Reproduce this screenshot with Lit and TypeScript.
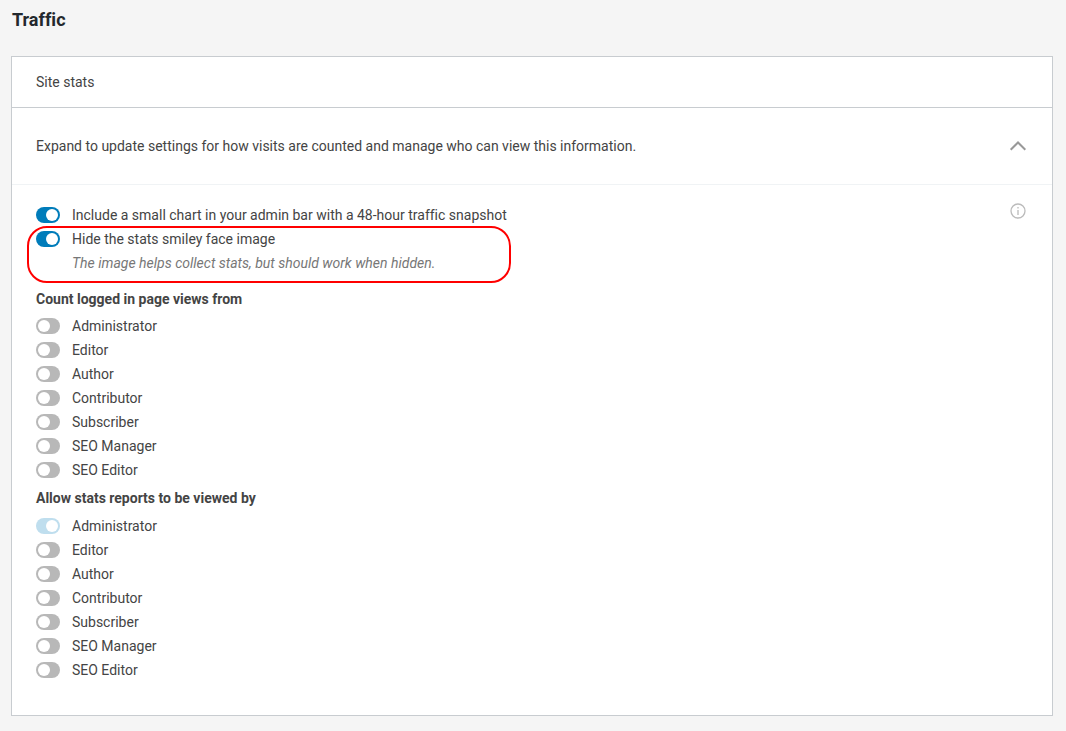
import { LitElement, html, css } from "lit";
import { customElement, property, state } from "lit/decorators.js";

interface Role {
  name: string;
  on?: boolean;
  disabled?: boolean;
}

const COUNT_ROLES: Role[] = [
  { name: "Administrator" },
  { name: "Editor" },
  { name: "Author" },
  { name: "Contributor" },
  { name: "Subscriber" },
  { name: "SEO Manager" },
  { name: "SEO Editor" },
];

const VIEW_ROLES: Role[] = COUNT_ROLES.map((role) =>
  role.name === "Administrator" ? { ...role, on: true, disabled: true } : role
);

@customElement("toggle-row")
export class ToggleRow extends LitElement {
  @property() label = "";
  @property({ type: Boolean }) on = false;
  @property({ type: Boolean }) disabled = false;

  static styles = css`
    :host {
      display: block;
    }
    .row {
      display: flex;
      align-items: center;
      gap: 12px;
      width: fit-content;
    }
    .switch {
      appearance: none;
      box-sizing: border-box;
      flex: none;
      display: flex;
      align-items: center;
      width: 24px;
      height: 16px;
      margin: 0;
      padding: 0 2px;
      border-radius: 8px;
      background: #b8b8b8;
      cursor: pointer;
    }
    .switch::before {
      content: "";
      width: 12px;
      height: 12px;
      border-radius: 50%;
      background: #fff;
    }
    .switch:checked {
      justify-content: flex-end;
      background: #007cba;
    }
    .switch:disabled {
      background: #bfdeee;
      cursor: default;
    }
    .switch:focus-visible {
      outline: 2px solid #007cba;
      outline-offset: 1px;
    }
  `;

  render() {
    return html`<label class="row">
      <input
        class="switch"
        type="checkbox"
        role="switch"
        .checked=${this.on}
        ?disabled=${this.disabled}
        @change=${(e: Event) => (this.on = (e.target as HTMLInputElement).checked)}
      />
      <span>${this.label}</span>
    </label>`;
  }
}

@customElement("app-root")
export class AppRoot extends LitElement {
  @state() private open = true;

  static styles = css`
    :host {
      display: block;
      box-sizing: border-box;
      min-height: 100vh;
      padding: 8px 13px 15px 11px;
      background: #f5f5f5;
      color: #444;
      font: 14px/24px Roboto, "Open Sans", sans-serif;
      font-variant-ligatures: none;
    }
    .title {
      margin: 0 0 24px 1px;
      color: #23282d;
      font-size: 18px;
      line-height: 24px;
      font-weight: 700;
    }
    .card {
      border: 1px solid #c8ccd0;
      background: #fff;
    }
    .card-title {
      margin: 0;
      padding: 13px 24px;
      border-bottom: 1px solid #c8ccd0;
      font-size: 14px;
      font-weight: 400;
    }
    .summary {
      display: flex;
      align-items: center;
      justify-content: space-between;
      padding: 26px 24px;
      border-bottom: 1px solid #f0f3f5;
    }
    .summary-text {
      margin: 0;
    }
    .icon-button {
      display: block;
      flex: none;
      padding: 0;
      border: 0;
      background: none;
      cursor: pointer;
    }
    .icon {
      display: block;
      width: 20px;
      height: 20px;
      fill: none;
    }
    .chevron {
      stroke: #999;
      stroke-width: 2;
    }
    .info {
      stroke: #bbb;
      stroke-width: 1.3;
    }
    .settings {
      display: flex;
      align-items: flex-start;
      justify-content: space-between;
      padding: 16px 24px 33px;
    }
    .settings[hidden] {
      display: none;
    }
    .options {
      padding-top: 2px;
    }
    .featured {
      position: relative;
      margin-bottom: 8px;
    }
    .highlight {
      position: absolute;
      inset: -1px auto -8px -9px;
      box-sizing: border-box;
      width: 484px;
      border: 2px solid #f00;
      border-radius: 20px;
      pointer-events: none;
    }
    .hint {
      margin: 0 0 0 36px;
      color: #777;
      font-style: italic;
    }
    .group {
      margin: 0;
      padding: 0;
      border: 0;
    }
    .group-title {
      padding: 4px 0 3px;
      font-weight: 700;
    }
    .group + .group {
      padding-top: 1px;
    }
  `;

  private group(title: string, roles: Role[]) {
    return html`<fieldset class="group">
      <legend class="group-title">${title}</legend>
      ${roles.map(
        (r) => html`<toggle-row .label=${r.name} .on=${!!r.on} .disabled=${!!r.disabled}></toggle-row>`
      )}
    </fieldset>`;
  }

  render() {
    return html`
      <h1 class="title">Traffic</h1>
      <section class="card">
        <h2 class="card-title">Site stats</h2>
        <div class="summary">
          <p class="summary-text">
            Expand to update settings for how visits are counted and manage who can view this information.
          </p>
          <button
            class="icon-button"
            type="button"
            aria-label="Toggle settings"
            aria-expanded=${this.open ? "true" : "false"}
            @click=${() => (this.open = !this.open)}
          >
            <svg class="icon chevron" viewBox="0 0 20 20" aria-hidden="true">
              <path d="M2.7 13.8 10 6.5l7.3 7.3" />
            </svg>
          </button>
        </div>
        <div class="settings" ?hidden=${!this.open}>
          <div class="options">
            <toggle-row
              label="Include a small chart in your admin bar with a 48-hour traffic snapshot"
              on
            ></toggle-row>
            <div class="featured">
              <toggle-row label="Hide the stats smiley face image" on></toggle-row>
              <p class="hint">The image helps collect stats, but should work when hidden.</p>
              <div class="highlight"></div>
            </div>
            ${this.group("Count logged in page views from", COUNT_ROLES)}
            ${this.group("Allow stats reports to be viewed by", VIEW_ROLES)}
          </div>
          <button class="icon-button" type="button" aria-label="More information">
            <svg class="icon info" viewBox="0 0 20 20" aria-hidden="true">
              <circle cx="10" cy="10" r="7" />
              <path d="M10 6v1.5M10 9v5" />
            </svg>
          </button>
        </div>
      </section>
    `;
  }
}
